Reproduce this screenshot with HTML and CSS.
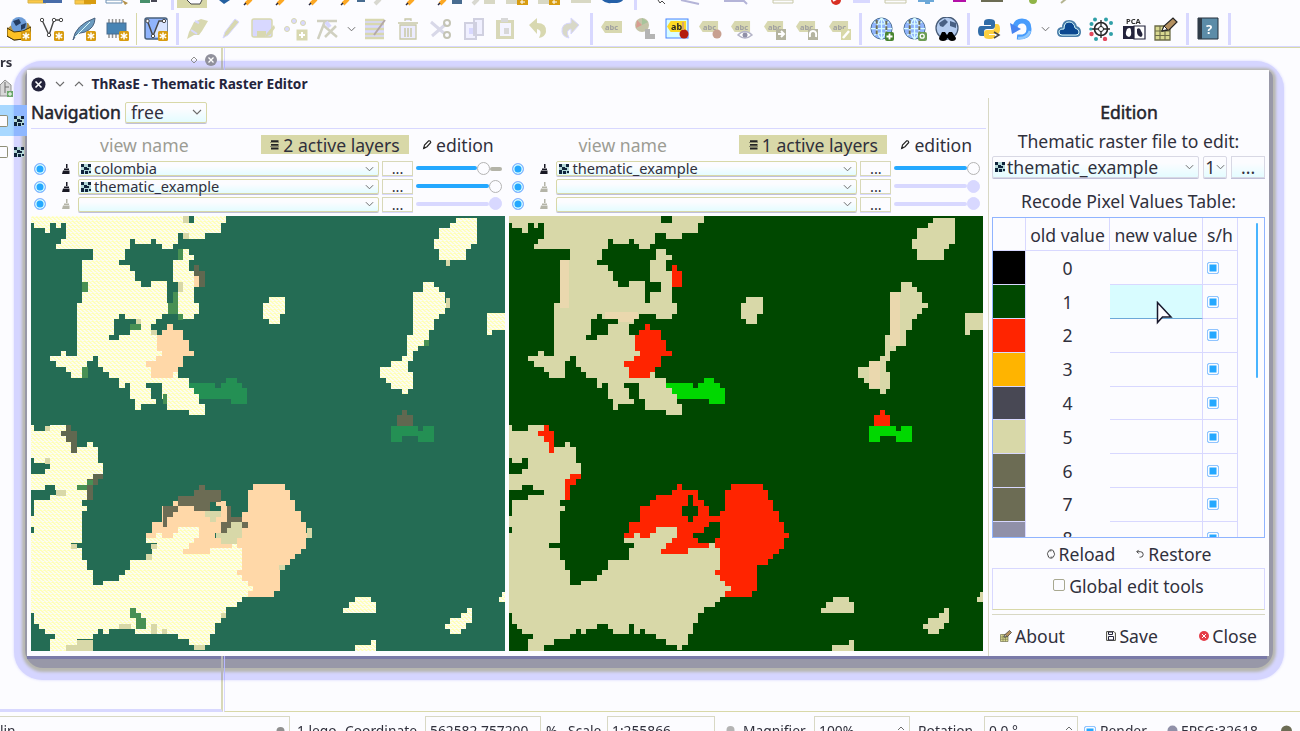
FILE: index.html
```
<!DOCTYPE html>
<html lang="en">
<head>
<meta charset="utf-8">
<title>ThRasE - Thematic Raster Editor</title>
<link rel="stylesheet" href="styles.css">
</head>
<body>
<svg class="defs" aria-hidden="true">
  <defs>
    <pattern id="dither" width="12" height="12" patternUnits="userSpaceOnUse">
      <rect width="12" height="12" fill="#fcfcf8"/>
      <path d="M0 0h6v3H0zM6 3h3v3H6zM3 6h6v3H3zM9 9h3v3H9zM0 9h3v3H0zM9 6h3v3H9z" fill="#ffffb4"/>
    </pattern>
    <symbol id="chev" viewBox="0 0 10 6"><path d="M1 1l4 4 4-4" fill="none" stroke="#6c6c6c" stroke-width="1.1"/></symbol>
    <symbol id="raster" viewBox="0 0 10 10"><path d="M0 0h10v10H0z" fill="#b4d8d8"/><path d="M0 0h3v3H0zM3 3h3v3H3zM0 6h3v4H0zM7 0h3v3H7zM6 4h2v2H6zM4 7h3v3H4zM8 7h2v2H8z" fill="#10243c"/></symbol>
    <symbol id="brush" viewBox="0 0 8 10"><path d="M4 0h1.500v4H4zM2 4.500h5V6H2zM1 6.500h6.500V10H0z"/></symbol>
    <symbol id="star" viewBox="0 0 10 10"><rect width="10" height="10" rx="1.5" fill="#d89c10"/><path d="M5 1.5v7M1.8 3.2l6.4 3.6M8.2 3.2L1.8 6.8" stroke="#fff" stroke-width="1.5"/></symbol>
    <symbol id="pencil" viewBox="0 0 12 12"><path d="M2 10l1-4 5-5q2-.5 2.500 2L6 8z" fill="#fff" stroke="#242424" stroke-width="1.400"/><path d="M1.500 10.500l1-3 2 2z" fill="#242424"/></symbol>
    <symbol id="stack" viewBox="0 0 10 10"><path d="M1 1.200h7.500M1 4.800h7.500M1 8.500h7.500" stroke="#242424" stroke-width="1.800"/><path d="M0 2.500h9M0 6.500h9" stroke="#6c6c54" stroke-width=".7"/></symbol>
    <symbol id="tag" viewBox="0 0 22 12"><path d="M0 6l4-6h17v12H4z"/></symbol>
    <symbol id="globe" viewBox="0 0 26 26"><circle cx="12" cy="12" r="11" fill="#90b4fc" stroke="#486c90"/><path d="M12 1v22M1 12h22M4 5q8 5 16 0M4 19q8-5 16 0M12 1Q2 12 12 23Q22 12 12 1" fill="none" stroke="#d8fcff" stroke-width="1.300"/><path d="M7 3v16M17 4v15" stroke="#6c6c54" stroke-width="2" stroke-dasharray="4 1.500"/></symbol>
    <symbol id="grideraser" viewBox="0 0 24 24"><path d="M1 9h15v14H1z" fill="#d8d890" stroke="#6c6c48" stroke-width="1.300"/><path d="M6 9v14M11 9v14M1 14h15M1 18.500h15" stroke="#6c6c48" stroke-width="1.100"/><path d="M8 14l2-5 9-8 4 4-8 8z" fill="#b49060" stroke="#242424" stroke-width="1.200"/><path d="M8 14l2-5 3.500 3.500z" fill="#fff" stroke="#242424"/></symbol>

    <symbol id="landcover" viewBox="0 0 1430 1320" overflow="visible">
      <path class="c-sand" d="M0 0H458V23H492V0H587V23H571V55H523V71H475V55H442V87H427V103H394V87H378V73H362V87H314V73H299V103H283V135H266V151H299V167H314V199H331V215H362V199H411V264H427V232H458V200H427V135H443V103H475V119H491V135H475V167H491V264H507V296H491V311H443V296H394V311H378V328H362V360H380V408H395V424H378V438H347V456H362V488H427V472H442V488H475V520H491V536H507V568H523V600H475V584H411V552H394V504H347V520H362V552H378V568H331V584H314V552H299V504H283V520H266V488H235V472H219V456H203V424H187V438H171V488H122V472H107V456H77V438H59V424H91V408H107V424H139V264H155V135H187V103H77V87H91V71H107V23H91V39H77V23H59V55H43V39H11V23H0Z"/>
      <path class="c-forest" d="M266 296H283V311H331V328H299V360H266V375H235V360H250V311H266Z"/>
      <path class="c-red1" d="M491 151H507V167H523V215H491Z"/>
      <path class="c-red" d="M411 328H427V344H458V375H475V408H491V424H458V456H442V472H427V488H362V456H347V438H378V424H395V408H380V360H394V344H411Z"/>
      <path class="c-green" d="M475 504H555V520H571V504H587V488H619V504H635V520H651V568H603V552H507V536H491V520H475Z"/>
      <g transform="translate(678)">
        <path class="c-sand" d="M37 247H86V296H70V328H37V311H21V264H37ZM598 8H662V87H645V103H629V136H549V103H533V72H549V40H582V24H598ZM500 200H533V216H549V232H565V264H582V280H565V296H549V311H533V344H517V392H485V408H469V438H455V472H469V521H455V536H437V521H405V503H389V488H372V457H405V438H437V424H453V360H469V232H500ZM692 295H750V344H708V359H692Z"/>
        <path class="c-red1" d="M437 585H453V601H469V632H421V601H437Z"/>
        <path class="c-green" d="M405 632H485V648H500V632H533V680H485V664H437V680H405Z"/>
      </g>
      <g transform="translate(0 615)">
        <path class="c-sand" d="M0 16H12V34H59V16H107V48H139V82H171V65H187V82H203V129H219V162H187V178H171V241H155V257H171V273H155V370H122V384H155V419H171V450H187V496H219V482H266V466H283V450H299V419H364V384H379V370H347V354H378V338H395V354H427V338H443V321H507V354H491V370H475V386H459V402H540V384H604V370H620V384H636V450H620V466H636V482H652V498H668V514H652V530H636V546H620V562H588V578H571V609H555V641H540V674H523V690H507V674H475V658H443V641H411V626H395V641H379V611H364V641H315V626H299V611H266V626H235V641H219V626H203V641H187V658H139V674H107V700H59V658H75V641H43V626H27V611H12V578H0Z"/>
        <path class="c-forest" d="M0 114H12V130H43V114H59V146H43V161H0ZM43 194H75V210H107V226H59V241H12V289H0V210H43ZM0 321H12V338H0Z"/>
        <path class="c-red1" d="M107 16H122V34H139V98H122V65H107V48H91V34H107ZM187 162H219V178H203V194H187V241H171V178H187Z"/>
        <path class="c-red" d="M507 193H523V210H571V241H588V257H604V289H636V273H652V210H668V193H764V210H779V241H795V273H812V305H828V338H844V354H828V386H812V402H795V418H779V434H748V514H732V530H652V514H668V498H652V482H636V466H620V450H636V384H620V354H636V305H604V321H588V338H555V354H571V370H604V384H540V402H459V386H475V370H491V354H507V321H443V338H427V354H395V338H378V354H347V338H364V305H395V257H427V241H443V226H491V210H507Z"/>
        <path class="c-forest" d="M540 226H555V257H571V289H555V305H540V289H523V257H540Z"/>
      </g>
      <path class="c-sand" d="M975 1146H1022V1162H1037V1194H939V1178H955V1162H975ZM1309 1180H1324V1225H1308V1242H1292V1258H1260V1242H1244V1226H1260V1210H1292V1194H1309ZM1022 1274H1037V1310H973V1290H1022ZM1407 1146H1415V1130H1430V1162H1407Z"/>
    </symbol>
  </defs>
</svg>

<div class="app">
  <div class="toolbar-top">
    <svg width="1300" height="10" viewBox="0 0 1300 10">
      <path d="M28 0h18v3H28zM75 0h16v4H75z" fill="#fcc848" stroke="#d8b448"/>
      <path d="M43 0h19v3H43z" fill="#486ca8"/>
      <path d="M84 0h12v4H84z" fill="#d89c10"/><path d="M106 0h16v3h-16z" fill="#fff" stroke="#6c90b4"/><path d="M122 0l6 3-3 2z" fill="#b49048"/>
      <path d="M140 0h10v3h-10z" fill="#48906c"/><path d="M151 0h6v2h-6z" fill="#484854"/>
      <path d="M171 0h3v10h-3zM634 0h3v10h-3z" fill="#d8d8ff"/>
      <path d="M177 0h30v8h-30z" fill="#d8d8a8"/><path d="M187 0l4 4h9l2-4" fill="#fcfcff" stroke="#484848"/>
      <path d="M219 0h11l-6 4z" fill="#2460a0"/>
      <g stroke="#fca824" stroke-width="4"><path d="M246 4l5-5M278 4l5-5M311 4l5-5M343 4l5-5M408 4l5-5M440 4l5-5"/></g>
      <g stroke="#24243c" stroke-width="1.500"><path d="M244 5l2-2M276 5l2-2M309 5l2-2M341 5l2-2M406 5l2-2M438 5l2-2"/></g>
      <path d="M375 4l5-5M473 4l5-5" stroke="#d8d8d0" stroke-width="4"/>
      <path d="M357 0h8v2h-8zM452 0h10v4h-10z" fill="#486c90"/><path d="M484 0h11v4h-11zM506 0h12v4h-12zM538 0h12v4h-12zM571 0h20v3h-20z" fill="#d8d8c4"/>
      <path d="M517 0h11v5h-11zM549 0h11v5h-11z" fill="#d89c10"/><path d="M520 2h5M522 0v4M552 2h5M554 0v4" stroke="#fff"/>
      <path d="M602 0q4 4 9 3h6q5-1 6-3z" fill="#2460a8"/>
      <path d="M658 0l2 3 2-2 3 3" fill="none" stroke="#484848"/><path d="M681 0l9 2 9 2M724 1h20l3 3" fill="none" stroke="#b4b4d8" stroke-width="2"/>
      <path d="M773 0h20v3h-20zM885 0h21v3h-21z" fill="#fcfcff" stroke="#c8c8a8"/>
      <circle cx="836" cy="0" r="5" fill="#d83024"/><path d="M833 1l5-3" stroke="#fff" stroke-width="2"/><path d="M853 0h17v3h-17z" fill="#d8d8ff"/>
      <path d="M918 0h16v2h-16M925 0h5v4h-5z" fill="#6ca8d8"/><path d="M953 0h13v2h-13z" fill="#b410a8"/><path d="M981 0h22v2h-22z" fill="#6c6c54"/><circle cx="1033" cy="0" r="4" fill="#90b448"/><path d="M1061 3l5-4" stroke="#b4b490" stroke-width="2"/>
    </svg>
  </div>

  <div class="toolbar">
    <i class="slot"><svg viewBox="0 0 24 24"><path d="M0 11l7 4v8l-7-4zM24 10l-8 4-9 1v8l10-1 7-4z" fill="#fcb424" stroke="#48360c"/><path d="M1 11l6-5 14 0 3 5-8 4H7z" fill="#b4903c"/><circle cx="12" cy="8" r="8" fill="#6c9cd8"/><path d="M6 4l6-2 2 4-5 3zM14 8l5-2-1 5-4 2z" fill="#243c60"/><path d="M0 11l7 4 9-1 8-4v8l-7 4-10 1-7-4z" fill="#fcc024" stroke="#48360c"/><use href="#star" x="14" y="14" width="10" height="10"/></svg></i>
    <i class="slot"><svg viewBox="0 0 24 24"><path d="M2 3l7 15L14 3h7" fill="none" stroke="#484848" stroke-width="1.400"/><g fill="#fff" stroke="#484848"><circle cx="2" cy="3" r="1.700"/><circle cx="9" cy="18" r="1.700"/><circle cx="14" cy="3" r="1.700"/><circle cx="21" cy="3" r="1.700"/></g><use href="#star" x="14" y="14" width="10" height="10"/></svg></i>
    <i class="slot"><svg viewBox="0 0 24 24"><path d="M1 23Q3 8 23 1q0 10-10 14-5 1-8 2z" fill="#6c9cc0" stroke="#48607c"/><path d="M3 20L18 5" stroke="#d8fcff"/><use href="#star" x="14" y="14" width="10" height="10"/></svg></i>
    <i class="slot"><svg viewBox="0 0 24 24"><path d="M4 2v19M7.500 2v19M11 2v19M14.500 2v19M18 2v14" stroke="#909090" stroke-width="1.500"/><rect x="2" y="6" width="19" height="11" fill="#4884b4" stroke="#486c90"/><use href="#star" x="14" y="14" width="10" height="10"/></svg></i>
    <i class="thin"></i>
    <i class="slot"><svg viewBox="0 0 24 24"><rect x="1" y="1" width="22" height="21" rx="2" fill="#90b4fc" stroke="#48607c" stroke-width="1.500"/><path d="M8 19l8-16h7v19z" fill="#d8e4ff"/><path d="M3 3l6 16 6-15h6" fill="none" stroke="#484848" stroke-width="1.500"/><g fill="#fff" stroke="#484848"><circle cx="3.500" cy="4" r="1.700"/><circle cx="9" cy="19" r="1.700"/><circle cx="20" cy="4" r="1.700"/></g><use href="#star" x="14" y="14" width="10" height="10"/></svg></i>
    <i class="grip"></i>
    <i class="slot"><svg viewBox="0 0 24 24"><path d="M1 22l2-7L8 5l7-3 7 2-6 10-3 4-5 0z" fill="#d8d8b0"/><path d="M9 4l4 2M5 13l6 4" stroke="#d8d8ff" stroke-width="2"/></svg></i>
    <i class="slot"><svg viewBox="0 0 24 24"><path d="M4 21l2-6L16 2l4 3L9 18z" fill="#d8d8b0" stroke="#d8d8ff"/></svg></i>
    <i class="slot"><svg viewBox="0 0 24 24"><rect x="1" y="2" width="20" height="18" rx="2" fill="#d8d8ff" stroke="#d8d8b0" stroke-width="1.500"/><path d="M6 14h9v6H6zM23 8l-7 8-2 4 5-2 5-7z" fill="#d8d8b0"/></svg></i>
    <i class="slot"><svg viewBox="0 0 24 24"><g fill="#d8d8ff" stroke="#d8d8b0"><circle cx="3" cy="12" r="2.500"/><circle cx="10" cy="4" r="2.500"/><circle cx="19" cy="6" r="2.500"/><rect x="13" y="13" width="10" height="10" fill="#d8d8b0"/></g><path d="M18 15v6M15 18h6" stroke="#fff" stroke-width="2"/></svg></i>
    <i class="slot"><svg viewBox="0 0 24 24"><path d="M2 22L9 4M1 4h20M7 8l14 12M9 20L20 9" fill="none" stroke="#d0d0c0" stroke-width="2.500"/><path d="M10 5l4 5" stroke="#d8d8ff" stroke-width="4"/></svg></i>
    <i class="drop"><svg viewBox="0 0 10 6"><use href="#chev"/></svg></i>
    <i class="slot"><svg viewBox="0 0 24 24"><path d="M2 2h19v20H2z" fill="#d8d8ff"/><path d="M2 3h19M2 7h19M2 12h19M2 17h19M2 21h19" stroke="#d8d8b0" stroke-width="2.500"/><path d="M11 18L22 3" stroke="#b4a8a8" stroke-width="2"/></svg></i>
    <i class="slot"><svg viewBox="0 0 24 24"><path d="M9 4V2h6v2M4 8h16v14H4z" fill="#ececff" stroke="#c8c8a8" stroke-width="1.300"/><path d="M2 6h20M9 11v9M12 11v9M15 11v9" stroke="#c8c8a8" stroke-width="1.500"/></svg></i>
    <i class="slot"><svg viewBox="0 0 24 24"><path d="M3 5l14 12M4 19L18 7" stroke="#d8d8e8" stroke-width="3"/><circle cx="19" cy="6" r="3" fill="none" stroke="#c4c4b4" stroke-width="2"/><circle cx="19" cy="18" r="3" fill="none" stroke="#c4c4b4" stroke-width="2"/></svg></i>
    <i class="slot"><svg viewBox="0 0 24 24"><path d="M13 2h9v16h-9zM4 6h11v16H4z" fill="#f0f0ff" stroke="#d0d0e0" stroke-width="2"/><path d="M8 11h4v6H8z" fill="#d8d8ff"/></svg></i>
    <i class="slot"><svg viewBox="0 0 24 24"><path d="M3 3h18v19H3z" fill="#d8d8b8"/><path d="M7 6h11v13H7z" fill="#f4f4ff"/><path d="M8 1h7v4H8zM11 11h5v6h-5z" fill="#d8d8d8"/></svg></i>
    <i class="slot"><svg viewBox="0 0 24 24"><path d="M3 8l8-7v5q10 0 9 9-1 5-7 6 4-8-2-9v5z" fill="#d8d8b0"/></svg></i>
    <i class="slot"><svg viewBox="0 0 24 24"><path d="M21 8l-8-7v5Q3 6 4 15q1 5 7 6-4-8 2-9v5z" fill="#d8d8c8" stroke="#d8d8ff"/></svg></i>
    <i class="grip"></i>
    <i class="slot"><svg viewBox="0 0 24 24"><use href="#tag" x="1" y="4" width="22" height="12" fill="#d8d8b0"/><text x="5" y="13" class="abc">abc</text></svg></i>
    <i class="slot"><svg viewBox="0 0 24 24"><circle cx="9" cy="8" r="7" fill="#c4c4a8"/><path d="M9 8V1l6 4z" fill="#a8c49c"/><path d="M9 8l-6 3 1-8z" fill="#d89c90"/><path d="M12 12h5v5h5v5H12z" fill="#b4b4b4"/></svg></i>
    <i class="slot"><svg viewBox="0 0 24 24"><rect x="1" y="2" width="22" height="19" fill="#d8fcff" stroke="#4884ff"/><use href="#tag" x="2" y="4" width="20" height="11" fill="#fcd824"/><text x="6" y="12.500" class="abc on">ab</text><circle cx="19" cy="17" r="4.500" fill="#b41c10"/><path d="M18 5v8" stroke="#d8a86c" stroke-width="2"/></svg></i>
    <i class="slot"><svg viewBox="0 0 24 24"><use href="#tag" x="1" y="4" width="20" height="11" fill="#d8d8b0"/><text x="5" y="12.500" class="abc">abc</text><circle cx="19" cy="17" r="4.500" fill="#c8a090"/></svg></i>
    <i class="slot"><svg viewBox="0 0 24 24"><use href="#tag" x="1" y="4" width="20" height="11" fill="#d8d8b0"/><text x="5" y="12.500" class="abc">abc</text><path d="M8 18q7-7 14 0-7 6-14 0z" fill="#fff" stroke="#b4b4c8" stroke-width="1.500"/><circle cx="15" cy="18" r="2.500" fill="#9090a8"/></svg></i>
    <i class="slot"><svg viewBox="0 0 24 24"><use href="#tag" x="1" y="4" width="20" height="11" fill="#d8d8b0"/><text x="5" y="12.500" class="abc">abc</text><path d="M13 12h10v11H13z" fill="#b4b4a0"/><path d="M15 17h6M18 14l3 3-3 3" stroke="#fff" stroke-width="2" fill="none"/></svg></i>
    <i class="slot"><svg viewBox="0 0 24 24"><use href="#tag" x="1" y="4" width="20" height="11" fill="#d8d8b0"/><text x="5" y="12.500" class="abc">abc</text><path d="M13 12h10v11H13z" fill="#b4b4a0"/><path d="M15 20q-1-6 3-6t3 6" stroke="#fff" stroke-width="2" fill="none"/></svg></i>
    <i class="slot"><svg viewBox="0 0 24 24"><use href="#tag" x="1" y="4" width="20" height="11" fill="#d8d8b0"/><text x="5" y="12.500" class="abc">abc</text><path d="M13 12h10v11H13z" fill="#d8d8a8"/><path d="M15 21l6-7" stroke="#fff" stroke-width="2.500"/></svg></i>
    <i class="grip"></i>
    <i class="slot"><svg viewBox="0 0 24 24"><use href="#globe" width="25" height="25"/><rect x="15" y="15" width="9" height="9" rx="2" fill="#488430"/><path d="M19.500 16.500v6M16.500 19.500h6" stroke="#fff" stroke-width="1.800"/></svg></i>
    <i class="slot"><svg viewBox="0 0 24 24"><use href="#globe" width="25" height="25"/><rect x="15" y="15" width="9" height="9" rx="2" fill="#6c9c54"/><circle cx="19.200" cy="19.200" r="2" fill="none" stroke="#fff" stroke-width="1.300"/></svg></i>
    <i class="slot"><svg viewBox="0 0 24 24"><circle cx="12" cy="11" r="11" fill="#b4ccf0" stroke="#485c78" stroke-width="1.300"/><path d="M4 6l6-4 3 3-5 5-3-1zM15 4l6 2v5l-6-2z" fill="#486084"/><path d="M4 21l3-6h3l2 3 2-3h3l4 6q0 3-4 3-3 0-4-3h-1q0 3-4 3-4 0-4-3z" fill="#000"/></svg></i>
    <i class="grip"></i>
    <i class="slot"><svg viewBox="0 0 24 24"><path d="M12 2q-5 0-5 3v3h7v1H4q-3 0-3 5t3 5h3v-4q0-3 3-3h5q3 0 3-3V5q0-3-6-3z" fill="#306ca8"/><path d="M12 22q-5 0-5-3v-3q0-3 3-3h5q3 0 3-4V7h2q3 0 3 5t-3 5h-8v1h6v2q-1 2-6 2z" fill="#fcd040"/><path d="M17 15l5 3-5 3" fill="none" stroke="#484848" stroke-width="1.500"/></svg></i>
    <i class="slot"><svg viewBox="0 0 24 24"><path d="M7 20q12 1 12-8 0-8-7-8-6 0-7 6" fill="none" stroke="#489cfc" stroke-width="5"/><path d="M0 6l2 11 9-5z" fill="#4884f0"/><path d="M8 21q9 1 12-7" stroke="#90c8fc" stroke-width="2.500" fill="none"/></svg></i>
    <i class="drop"><svg viewBox="0 0 10 6"><use href="#chev"/></svg></i>
    <i class="slot"><svg viewBox="0 0 24 24"><path d="M5 19q-4 0-4-4t5-4q0-7 6-7t7 6q4 1 4 5t-4 4z" fill="#0c4890" stroke="#487ca8" stroke-width="2"/><path d="M5 18q-3 0-3-3t5-3q0-7 5-7t6 6q4 1 4 4t-3 3z" fill="none" stroke="#d8fcff"/></svg></i>
    <i class="slot"><svg viewBox="0 0 24 24"><circle cx="12" cy="12" r="6.500" fill="none" stroke="#242424" stroke-width="1.600"/><circle cx="12" cy="12" r="2.500" fill="#fff" stroke="#242424"/><path d="M12 3v7M12 14v7M3 12h7M14 12h7" stroke="#242424" stroke-width="1.300"/><g fill="#30a0a8"><circle cx="6" cy="2.500" r="2"/><circle cx="17" cy="2.500" r="2"/><circle cx="2.500" cy="7" r="2"/><circle cx="22" cy="6" r="2"/><circle cx="22" cy="17" r="2"/><circle cx="7" cy="22" r="2"/><circle cx="1.800" cy="12" r="1.600"/></g><g fill="#e4485c"><circle cx="2.500" cy="17" r="2.200"/><circle cx="16" cy="22" r="2.200"/></g></svg></i>
    <i class="slot"><svg viewBox="0 0 24 24"><text x="4" y="7" class="pca">PCA</text><path d="M1 9h11v13H1z" fill="#24243c"/><path d="M12 9h11v13H12z" fill="#fff" stroke="#24243c" stroke-width="1.200"/><path d="M5 12q4-3 4 2 1 5-2 6-4-1-3-5z" fill="#fff"/><path d="M15 12q3-2 4 2 3 4 0 6-4-1-4-5z" fill="#24243c"/></svg></i>
    <i class="slot"><svg viewBox="0 0 24 24"><use href="#grideraser"/></svg></i>
    <i class="grip"></i>
    <i class="slot"><svg viewBox="0 0 24 24"><path d="M2 1h20v21H2z" fill="#5c8ca8" stroke="#24303c"/><path d="M2 1h4v21H2z" fill="#303c48"/><text x="10" y="16.500" class="help">?</text></svg></i>
    <i class="grip"></i>
  </div>

  <div class="workspace">
    <div class="dock">
      <div class="dock-head"><b>rs</b><span class="dock-btns"><svg width="8" height="8" viewBox="0 0 8 8"><path d="M4 1l3 3-3 3-3-3z" fill="none" stroke="#909090"/></svg><svg width="12" height="12" viewBox="0 0 12 12"><circle cx="6" cy="6" r="6" fill="#90909c"/><path d="M3.500 3.500l5 5M8.500 3.500l-5 5" stroke="#fff" stroke-width="1.300"/></svg></span></div>
      <div class="dock-tools"><svg width="14" height="20" viewBox="0 0 14 20"><path d="M0 6l5-5 6 5v11H0z" fill="#d8d8d8" stroke="#909090"/><path d="M5 3v11M5 8h4" stroke="#6c6c6c"/><path d="M7 12h6v6H7z" fill="#6ca86c"/><path d="M10 13v4M8 15h4" stroke="#fff"/></svg></div>
      <div class="layer sel"><i class="cb"></i><svg width="10" height="10"><use href="#raster"/></svg></div>
      <div class="layer"><i class="cb"></i><svg width="10" height="10"><use href="#raster"/></svg></div>
    </div>
    <div class="canvas"></div>
  </div>

  <div class="status">
    <div class="field locate">lin</div>
    <svg class="knob" width="9" height="12" viewBox="0 0 9 12"><circle cx="4.500" cy="7" r="4" fill="#909090"/></svg>
    <span class="lbl legend">1 lego</span>
    <span class="lbl coord">Coordinate</span>
    <div class="field xy">562582,757200</div>
    <span class="lbl pct">%</span>
    <span class="lbl scale">Scale</span>
    <div class="field sc">1:255866</div>
    <svg class="knob lock" width="9" height="12" viewBox="0 0 9 12"><circle cx="4.500" cy="6" r="4" fill="#b4b4b4"/></svg>
    <span class="lbl magl">Magnifier</span>
    <div class="field mag">100%<svg width="8" height="5" viewBox="0 0 8 5"><path d="M1 4l3-3 3 3" fill="none" stroke="#6c6c6c"/></svg></div>
    <span class="lbl rotl">Rotation</span>
    <div class="field rot">0.0 °<svg width="8" height="5" viewBox="0 0 8 5"><path d="M1 4l3-3 3 3" fill="none" stroke="#6c6c6c"/></svg></div>
    <i class="check big"></i>
    <span class="lbl render">Render</span>
    <svg class="knob" width="11" height="12" viewBox="0 0 11 12"><circle cx="5.500" cy="6.500" r="5" fill="#9090a8"/></svg>
    <span class="lbl epsg">EPSG:32618</span>
    <svg class="knob last" width="13" height="12" viewBox="0 0 13 12"><circle cx="6.500" cy="7" r="5.500" fill="#6c6c54"/></svg>
  </div>
</div>

<div class="halo"></div>
<div class="dialog">
  <div class="titlebar">
    <svg width="15" height="15" viewBox="0 0 15 15"><circle cx="7.500" cy="7.500" r="7" fill="#24243c"/><path d="M4.500 4.500l6 6M10.500 4.500l-6 6" stroke="#fff" stroke-width="1.600"/></svg>
    <svg width="10" height="6"><use href="#chev"/></svg>
    <svg class="up" width="10" height="6"><use href="#chev"/></svg>
    <b>ThRasE - Thematic Raster Editor</b>
  </div>
  <div class="panes">
    <div class="left">
      <div class="nav"><span class="heading">Navigation</span><div class="combo free"><span>free</span><svg width="10" height="6"><use href="#chev"/></svg></div></div>
      <div class="views">
        <section class="view">
          <div class="vhead"><span class="vname">view name</span><span class="active"><svg width="10" height="10"><use href="#stack"/></svg>2 active layers</span><span class="ed"><svg width="10" height="10"><use href="#pencil"/></svg>edition</span></div>
          <div class="lrow"><i class="radio"></i><svg class="brush" width="8" height="10"><use href="#brush"/></svg><div class="combo"><svg width="10" height="10"><use href="#raster"/></svg><span>colombia</span><svg class="cv" width="9" height="6"><use href="#chev"/></svg></div><div class="dots">...</div><div class="slider"><i class="fill partial"></i><i class="knob-c at"></i></div></div>
          <div class="lrow"><i class="radio"></i><svg class="brush" width="8" height="10"><use href="#brush"/></svg><div class="combo"><svg width="10" height="10"><use href="#raster"/></svg><span>thematic_example</span><svg class="cv" width="9" height="6"><use href="#chev"/></svg></div><div class="dots">...</div><div class="slider"><i class="fill"></i><i class="knob-c"></i></div></div>
          <div class="lrow off"><i class="radio"></i><svg class="brush" width="8" height="10"><use href="#brush"/></svg><div class="combo"><svg class="cv" width="9" height="6"><use href="#chev"/></svg></div><div class="dots">...</div><div class="slider"><i class="fill"></i><i class="knob-c"></i></div></div>
          <svg class="map map-a" viewBox="2 3 1422 1305" preserveAspectRatio="none">
            <use href="#landcover" width="1430" height="1320"/>
            <g transform="translate(-7)">
              <path class="c-forest" d="M404 800H659V890H642V906H596V858H563V888H498V874H450V858H434V890H418V937H404Z"/>
              <path fill="#6c6c54" d="M514 811H531V826H579V860H547V888H498V872H450V842H498V826H514ZM404 874H450V890H434V906H418V937H404ZM596 874H610V906H642V922H659V938H642V922H610V938H596V953H579V922H596Z"/>
              <path fill="#ffd8a8" d="M434 858H450V874H434ZM498 183H514V215H498Z"/>
              <path fill="#d8d8a8" d="M531 888H579V906H563V922H547V906H531ZM610 922H642V970H627V986H579V970H563V955H596V938H610ZM466 0h16v24h-16zM466 55h18v16h-18zM450 200h16v32h-16zM323 312h16v16h-16zM370 344h16v16h-16zM1253 248h14v32h-14zM1253 136h14v16h-14zM50 632h16v16H50zM50 730h16v16H50zM83 826h32v16H83zM130 986h18v16h-18zM370 986h16v16h-16zM355 1018h16v16h-16zM274 1226h34v16h-34zM370 1226h16v32h-16zM402 1242h16v16h-16zM148 1274h46v34h-80v-18h34zM498 1290h34v16h-34zM579 1194h16v16h-16zM754 1050h18v16h-18zM836 938h16v30h-16z"/>
              <path fill="#489054" d="M163 200h16v32h-16zM450 103h16v32h-16zM434 232h16v64h-30v-32h14zM450 296h16v18h-16zM307 328h32v16h-32zM163 456h16v32h-16zM404 536h14v32h-14zM1188 376h16v16h-16zM178 795h16v14h-16zM147 811h31v14h-31zM307 1180h16v14h16v16h16v32h-32v-32h-16z"/>
            </g>
          </svg>
        </section>
        <section class="view">
          <div class="vhead"><span class="vname">view name</span><span class="active"><svg width="10" height="10"><use href="#stack"/></svg>1 active layers</span><span class="ed"><svg width="10" height="10"><use href="#pencil"/></svg>edition</span></div>
          <div class="lrow"><i class="radio"></i><svg class="brush" width="8" height="10"><use href="#brush"/></svg><div class="combo"><svg width="10" height="10"><use href="#raster"/></svg><span>thematic_example</span><svg class="cv" width="9" height="6"><use href="#chev"/></svg></div><div class="dots">...</div><div class="slider"><i class="fill"></i><i class="knob-c"></i></div></div>
          <div class="lrow off"><i class="radio"></i><svg class="brush" width="8" height="10"><use href="#brush"/></svg><div class="combo"><svg class="cv" width="9" height="6"><use href="#chev"/></svg></div><div class="dots">...</div><div class="slider"><i class="fill"></i><i class="knob-c"></i></div></div>
          <div class="lrow off"><i class="radio"></i><svg class="brush" width="8" height="10"><use href="#brush"/></svg><div class="combo"><svg class="cv" width="9" height="6"><use href="#chev"/></svg></div><div class="dots">...</div><div class="slider"><i class="fill"></i><i class="knob-c"></i></div></div>
          <svg class="map map-b" viewBox="3 3 1422 1305" preserveAspectRatio="none"><use href="#landcover" width="1430" height="1320"/>
            <path fill="#fcd8b4" d="M155 135h27v144h-27zM290 290h100v22h-12v8h-48v-9h-40zM1147 232h30v160h-30zM1083 438h32v82h-32z" opacity=".5"/></svg>
        </section>
      </div>
    </div>
    <div class="right">
      <div class="heading">Edition</div>
      <div class="line file">Thematic raster file to edit:</div>
      <div class="pick">
        <div class="combo"><svg width="10" height="10"><use href="#raster"/></svg><span>thematic_example</span><svg class="cv" width="9" height="6"><use href="#chev"/></svg></div>
        <div class="combo band"><span>1</span><svg class="cv" width="9" height="6"><use href="#chev"/></svg></div>
        <div class="more">...</div>
      </div>
      <div class="line recode">Recode Pixel Values Table:</div>
      <div class="table">
        <div class="tr th"><i></i><span>old value</span><span>new value</span><span>s/h</span></div>
        <div class="tr"><i class="k0"></i><span>0</span><span></span><span><i class="check"></i></span></div>
        <div class="tr"><i class="k1"></i><span>1</span><span class="hot"></span><span><i class="check"></i></span></div>
        <div class="tr"><i class="k2"></i><span>2</span><span></span><span><i class="check"></i></span></div>
        <div class="tr"><i class="k3"></i><span>3</span><span></span><span><i class="check"></i></span></div>
        <div class="tr"><i class="k4"></i><span>4</span><span></span><span><i class="check"></i></span></div>
        <div class="tr"><i class="k5"></i><span>5</span><span></span><span><i class="check"></i></span></div>
        <div class="tr"><i class="k6"></i><span>6</span><span></span><span><i class="check"></i></span></div>
        <div class="tr"><i class="k6"></i><span>7</span><span></span><span><i class="check"></i></span></div>
        <div class="tr"><i class="k8"></i><span>8</span><span></span><span><i class="check"></i></span></div>
        <i class="scroll"></i>
      </div>
      <div class="acts">
        <span><svg width="10" height="10" viewBox="0 0 11 11"><path d="M3 2Q0 5 3 9M8 9Q11 6 8 2M3 2h3M8 9H5M4 1q3-1 5 2M7 10Q4 11 2 8" fill="none" stroke="#484848"/></svg>Reload</span>
        <span><svg width="10" height="10" viewBox="0 0 11 11"><path d="M4 1L2 3l2 2M2 3h4q3 0 3 3t-3 3H5" fill="none" stroke="#484848" stroke-width="1.100"/></svg>Restore</span>
      </div>
      <div class="global"><i class="empty"></i>Global edit tools</div>
      <div class="foot">
        <span><svg width="12" height="12"><use href="#grideraser"/></svg>About</span>
        <span><svg width="10" height="10" viewBox="0 0 10 10"><path d="M.6.6h7.400l1.400 1.400v7.400H.6z" fill="#fff" stroke="#48483c" stroke-width="1"/><path d="M2.500 1h4v2.500h-4zM2.500 5.500h5V9h-5z" fill="none" stroke="#24243c"/></svg>Save</span>
        <span><svg width="10" height="10" viewBox="0 0 10 10"><circle cx="5" cy="5" r="5" fill="#e43c48"/><path d="M3 3l4 4M7 3L3 7" stroke="#fff"/></svg>Close</span>
      </div>
    </div>
  </div>
</div>
<svg class="cursor" width="18" height="24" viewBox="0 0 18 24"><path d="M1.500 1.500v20l5-5.500H15z" fill="#fcfcff" stroke="#18182c" stroke-width="1.500"/></svg>
</body>
</html>
```
FILE: styles.css
```
* { box-sizing: border-box; }
body { margin: 0; width: 1300px; height: 731px; overflow: hidden; background: #fcfcff; color: #30303c; font-family: "Noto Sans", sans-serif; font-size: 17.600px; position: relative; }
svg { display: block; flex: none; }
i { display: block; font-style: normal; flex: none; }
.defs { position: absolute; width: 0; height: 0; }

/* Main window behind the dialog */
.app { display: flex; flex-direction: column; height: 731px; overflow: hidden; }
.toolbar-top { height: 11px; flex: none; }
.toolbar { height: 37px; flex: none; display: flex; align-items: center; padding-left: 3px; border-bottom: 1px solid #d8d8a8; box-shadow: inset 0 -1px #d8d8ff; }
.slot { width: 32.500px; display: flex; justify-content: center; }
.slot svg { width: 24px; height: 24px; }
.thin { width: 5px; height: 32px; border-left: 1px solid #d8d8a8; margin: 0 -1px 0 3px; }
.grip { width: 3px; height: 32px; background: #d8d8ff; margin: 0 3.300px; }
.drop { width: 14.500px; display: flex; justify-content: center; }
.drop svg { width: 9px; height: 6px; }
.abc { font: bold 7.500px "Noto Sans", sans-serif; fill: #a0a0a0; }
.abc.on { fill: #242424; font-size: 9px; }
.pca { font: bold 7.500px "Noto Sans", sans-serif; fill: #303030; }
.help { font: bold 13px "Noto Sans", sans-serif; fill: #fff; }
.workspace { flex: 1; display: flex; min-height: 0; }
.dock { width: 223px; border-right: 2px solid #d8d8b8; border-bottom: 3px solid #d8d8ff; }
.dock-head { height: 27px; display: flex; justify-content: space-between; align-items: center; font-size: 13px; padding-right: 4px; }
.dock-btns { display: flex; gap: 7px; align-items: center; margin-top: -3px; position: relative; z-index: 2; }
.dock-tools { height: 30px; padding-top: 4px; }
.layer { display: flex; align-items: center; gap: 6px; height: 31px; }
.layer.sel { background: #a8d8ff; }
.layer .cb { width: 8px; height: 12px; border: 1px solid #909078; border-left: 0; border-radius: 0 2px 2px 0; background: #fcfcff; }
.layer svg { position: relative; z-index: 2; }
.canvas { flex: 1; border-left: 1px solid #d8d8ff; border-bottom: 1px solid #d8d8a8; margin-left: 1px; }
.status { height: 19px; flex: none; display: flex; font-size: 13.800px; align-items: flex-start; overflow: hidden; line-height: 18px; white-space: nowrap; }
.status .field { border: 1px solid #d8d8c4; border-bottom: 0; height: 24px; margin-top: 4px; padding: 5px 4px 0; flex: none; display: flex; justify-content: space-between; }
.status .field svg { margin-top: 4px; }
.status .lbl { margin-top: 10px; flex: none; }
.status .knob { margin-top: 12px; }
.status .locate { width: 290px; margin-right: -14px; padding-left: 0; border-left: 0; }
.legend { width: 45px; margin-left: 12px; }
.coord { width: 80px; margin-left: 3px; }
.xy { width: 116px; }
.pct { width: 22px; margin-left: 5px; }
.scale { width: 39px; }
.sc { width: 108px; }
.status .lock { margin: 12px 8px 0 11px; }
.magl { width: 71px; }
.mag { width: 96px; margin-right: 8px; }
.rotl { width: 66px; }
.rot { width: 94px; }
.check.big { margin: 14px 4px 0 6px; }
.render { width: 67px; }
.epsg { width: 99px; margin-left: 3px; }

/* Dialog window and the halo around it */
.halo { position: absolute; left: 14px; top: 61px; width: 1270px; height: 619px; border-radius: 28px; background: #d8d8ff; box-shadow: 0 0 3px #d8d8ff; mix-blend-mode: multiply; }
.dialog { position: absolute; left: 27px; top: 70px; width: 1242px; height: 586px; background: #fcfcff; display: flex; flex-direction: column; }
.dialog::before { content: ""; position: absolute; z-index: -1; inset: 0 -4px -12px -2px; border-radius: 8px 8px 18px 18px; background: #b4b4a8; box-shadow: 0 1px 3px 3px #d8d8b0; }
.dialog::after { content: ""; position: absolute; z-index: -1; inset: auto 2px -3px 0; height: 6px; background: #9090a8; }
.titlebar { height: 28px; display: flex; align-items: center; padding: 0 0 2px 4px; gap: 9.500px; font-size: 13.700px; color: #24243c; flex: none; }
.titlebar svg { position: relative; top: 1px; }
.titlebar svg:first-child { margin-right: -1px; }
.titlebar .up { transform: rotate(180deg); }
.titlebar b { margin-left: -2px; }
.panes { flex: 1; display: flex; min-height: 0; }
.left { width: 962px; border-right: 1px solid #d8d8c4; padding-left: 4px; display: flex; flex-direction: column; }
.nav { height: 31px; border-bottom: 1px solid #d8d8ff; display: flex; align-items: center; margin-right: 2px; gap: 4px; padding-bottom: 2px; flex: none; }
.heading { color: #24242c; -webkit-text-stroke: .5px #24242c; }
.nav .heading { width: 90px; white-space: nowrap; }
.combo { display: flex; align-items: center; border: 1px solid #d8d8a8; border-radius: 2px; background: linear-gradient(#fcfcff 30%, #e4fcff); box-shadow: 0 1px #c0c0d8; min-width: 0; }
.combo .cv { margin-left: auto; margin-right: 4px; }
.combo.free { width: 82px; height: 21px; justify-content: space-between; padding: 0 4px 0 5px; }
.views { display: flex; gap: 4px; }
.view { width: 474.400px; display: flex; flex-direction: column; }
.vhead { display: flex; height: 31px; align-items: center; flex: none; }
.vname { width: 230px; padding-left: 69px; color: #9c9c94; }
.active { width: 148px; height: 19px; background: #d8d8a8; display: flex; align-items: center; justify-content: center; gap: 3px; white-space: nowrap; }
.ed { display: flex; align-items: center; gap: 4px; margin-left: 13px; }
.lrow { height: 17.700px; display: flex; align-items: center; flex: none; }
.radio { width: 12px; height: 12px; border-radius: 50%; background: #24a8ff; border: 1px solid #90b4ff; box-shadow: inset 0 0 0 1.500px #d8fcff; margin-left: 3px; }
.brush { margin-left: 16px; margin-right: 8px; fill: #181824; }
.off .brush { fill: #b4b4a8; }
.lrow .combo { width: 301px; height: 15px; padding-left: 2px; gap: 3px; font-size: 14.600px; line-height: 13px; }
.lrow .combo span { margin-top: -1px; }
.dots { width: 31px; height: 15px; margin-left: 3px; border: 1px solid #d8d8b8; text-align: center; font-size: 14.600px; line-height: 13px; box-shadow: 0 1px #d8d8ff; }
.slider { width: 86px; margin-left: 3px; height: 14px; display: flex; align-items: center; margin-top: -1px; }
.slider .fill { width: 73px; height: 4px; border-radius: 2px; background: #24a8ff; }
.slider .knob-c { width: 13px; height: 13px; border-radius: 50%; background: #fcfcff; border: 1px solid #b4b4b4; }
.slider .fill.partial { width: 61px; }
.slider .at::after { content: ""; display: block; width: 12px; height: 4px; margin: 4px 0 0 12px; background: #b4b4a8; border-radius: 2px; }
.off .fill, .off .knob-c { background: #d8d8ff; border-color: #d8d8ff; }
.map { width: 474px; height: 435px; margin-top: 2.900px; flex: none; shape-rendering: crispEdges; }
.map-a { background: #246c54; --sand: url(#dither); --forest: #246c54; --red: #ffd8a8; --red1: #606850; --green: #249054; }
.map-b { background: #004800; --sand: #d8d8a8; --forest: #004800; --red: #ff2400; --red1: #ff2400; --green: #00d800; }
.c-sand { fill: var(--sand); }
.c-forest { fill: var(--forest); }
.c-red { fill: var(--red); }
.c-red1 { fill: var(--red1); }
.c-green { fill: var(--green); }

/* Edition panel */
.right { width: 280px; padding: 0 4px 0 3px; display: flex; flex-direction: column; text-align: center; line-height: 24px; }
.right .heading { height: 28px; padding-top: 2px; padding-left: 1px; }
.line { height: 32px; padding-top: 3px; white-space: nowrap; }
.pick { height: 22px; display: flex; gap: 4px; margin-top: -1px; }
.pick .combo { width: 208px; height: 22px; gap: 2px; padding-left: 2px; border-color: #d8d8e4; }
.pick .combo.band { width: 24px; padding-left: 1px; gap: 0; }
.pick .band .cv { margin-right: 1px; }
.more { width: 34px; border: 1px solid #d8d8e4; box-shadow: 0 1px #c0c0d8; background: linear-gradient(#fcfcff 30%, #e4fcff); line-height: 20px; }
.recode { height: 39px; padding-top: 11px; }
.table { height: 321px; border: 1px solid #90b4ff; overflow: hidden; position: relative; flex: none; }
.tr { display: grid; grid-template-columns: 33px 84px 93px 35px; height: 33.800px; width: 245px; }
.tr > * { border-right: 1px solid #d8d8ff; border-bottom: 1px solid #d8d8ff; display: flex; align-items: center; justify-content: center; white-space: nowrap; }
.tr:not(.th) > :nth-child(2) { border-color: transparent; }
.tr:not(.th) > :last-child { justify-content: flex-start; padding-left: 3.500px; }
.th > * { padding-top: 1px; }
.k0 { background: #000; } .k1 { background: #004800; } .k2 { background: #ff2400; } .k3 { background: #ffb400; } .k4 { background: #484854; }
.k5 { background: #d8d8a8; } .k6 { background: #6c6c54; } .k8 { background: #9090a8; }
.hot { background: #d8fcff; border-bottom-color: #6ca8d8 !important; }
.check { width: 12px; height: 12px; border: 1px solid #90c4ff; border-radius: 2px; background: #24a8ff; box-shadow: inset 0 0 0 1.500px #fcfcff; }
.scroll { position: absolute; right: 6px; top: 5px; width: 2px; height: 155px; background: #48b4ff; border-radius: 1px; }
.acts { height: 31px; display: flex; justify-content: center; gap: 20px; padding-top: 2px; align-items: center; }
.acts span, .foot span { display: flex; align-items: center; gap: 3px; }
.global { height: 42px; border: 1px solid #d8d8ff; border-bottom-color: #d8d8a8; display: flex; justify-content: center; gap: 4px; padding-top: 5px; }
.empty { width: 12px; height: 12px; border: 1px solid #a8a890; border-radius: 2px; margin-top: 5px; }
.foot { margin-top: 4px; border-top: 1px solid #d8d8c4; height: 43px; display: flex; justify-content: space-between; align-items: center; padding: 1px 8px 0; }
.cursor { position: absolute; left: 1156px; top: 301px; }
```
